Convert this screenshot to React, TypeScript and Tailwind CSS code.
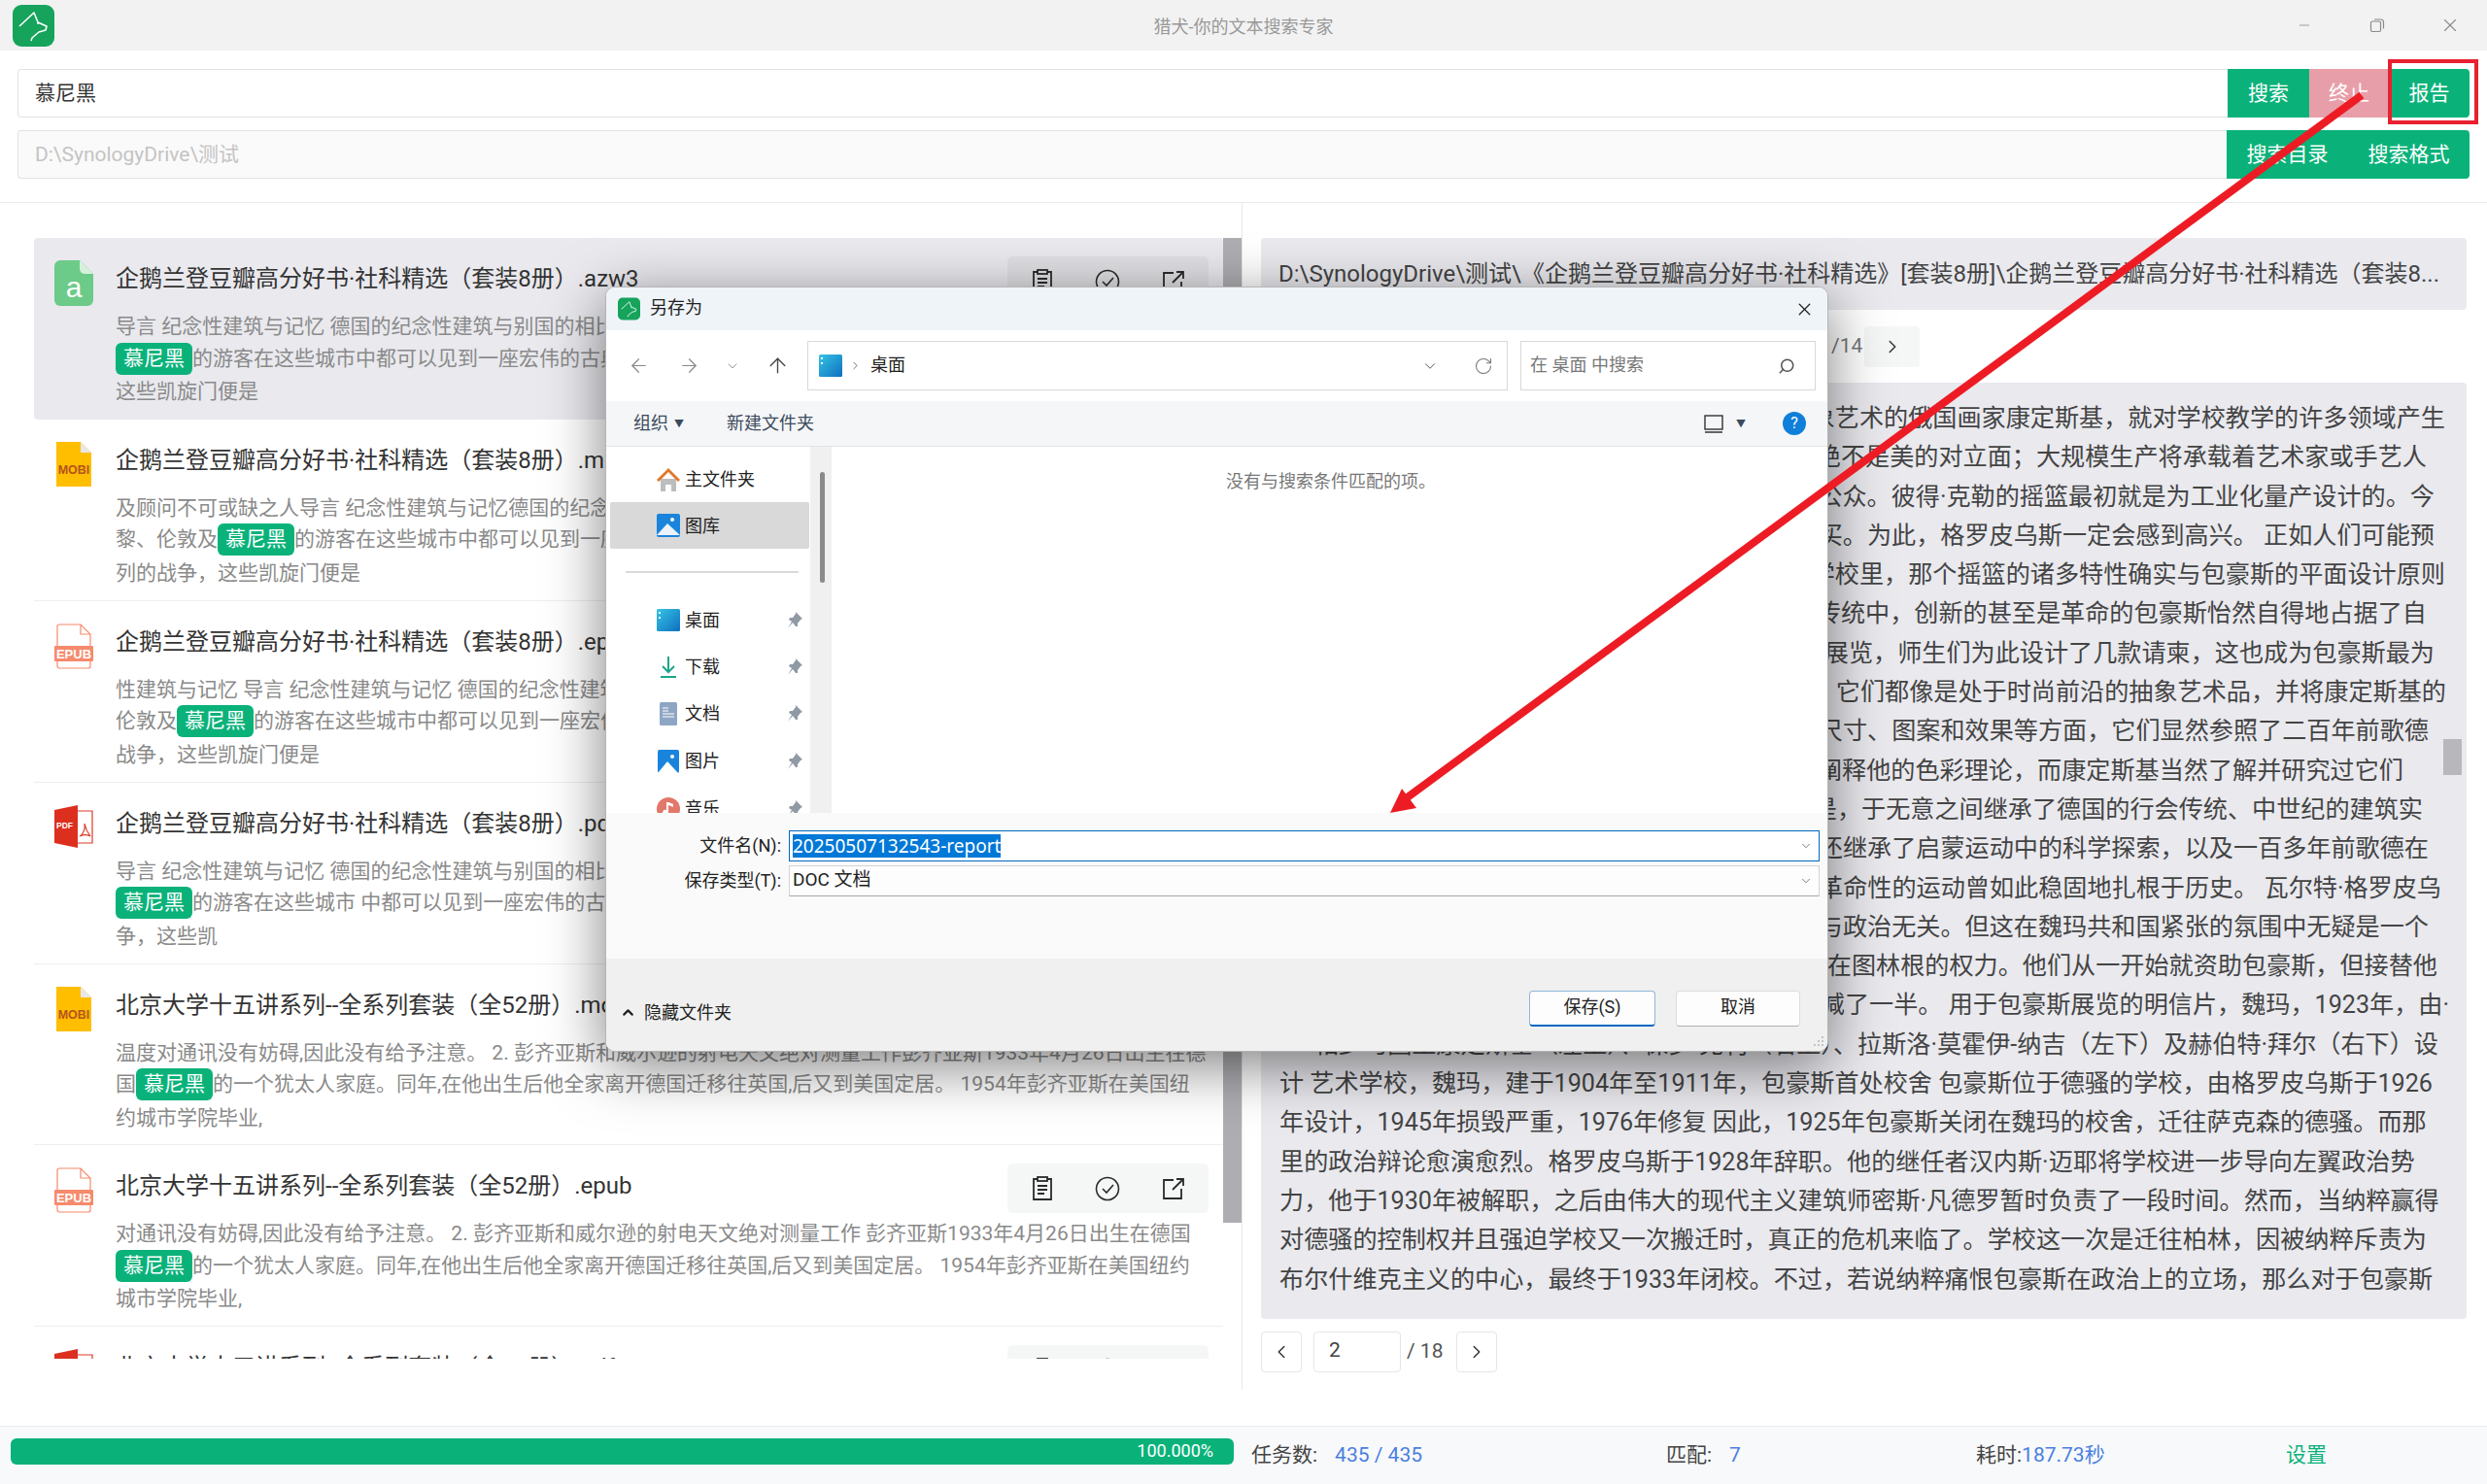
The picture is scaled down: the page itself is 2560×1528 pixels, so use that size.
import React from 'react';
import { ArrowLeft, ArrowRight, ArrowUp, ChevronDown, ChevronLeft, ChevronRight, ChevronUp, Minus, RotateCw, Search, X } from 'lucide-react';

const Logo = ({ className }: { className: string }) => (
  <svg className={className} viewBox="0 0 43 43">
    <rect width="43" height="43" rx="9" fill="#16a35c" />
    <path d="M7 22L22 8l4 10 9 4-1 4-7 2-7 6-1 3" fill="none" stroke="#fff" strokeWidth="1.6" strokeLinejoin="round" />
    <circle cx="26" cy="19" r="1" fill="#fff" />
  </svg>
);

const FileIcon = ({ type }: { type: string }) => {
  if (type === 'azw3') {
    return (
      <svg className="w-[40px] h-[47px]" viewBox="0 0 40 47">
        <path d="M6 0h20l14 14v27a6 6 0 0 1-6 6H6a6 6 0 0 1-6-6V6a6 6 0 0 1 6-6z" fill="#6ccb88" />
        <path d="M26 0v9a5 5 0 0 0 5 5h9z" fill="#d6f0dd" />
        <text x="20" y="38" textAnchor="middle" fontSize="30" fill="#fff" fontFamily="Liberation Sans">a</text>
      </svg>
    );
  }
  if (type === 'mobi') {
    return (
      <svg className="w-[40px] h-[47px]" viewBox="0 0 40 47">
        <path d="M2 0h25l11 11v35H2z" fill="#ffbe00" />
        <path d="M27 0l11 11H27z" fill="#e8e8e8" />
        <text x="20" y="33" textAnchor="middle" fontSize="12.5" fontWeight="700" fill="#b4541c" fontFamily="Liberation Sans">MOBI</text>
      </svg>
    );
  }
  if (type === 'epub') {
    return (
      <svg className="w-[40px] h-[47px]" viewBox="0 0 40 47">
        <path d="M3 3a2 2 0 0 1 2-2h22l10 10v33a2 2 0 0 1-2 2H5a2 2 0 0 1-2-2z" fill="#fff" stroke="#f68a6c" strokeWidth="1.2" />
        <path d="M27 1v10h10" fill="none" stroke="#f68a6c" strokeWidth="1.2" />
        <rect x="0" y="23" width="40" height="16" rx="1" fill="#f68a6c" />
        <text x="20" y="35.5" textAnchor="middle" fontSize="13" fontWeight="700" fill="#fff" fontFamily="Liberation Sans">EPUB</text>
      </svg>
    );
  }
  return (
    <svg className="w-[40px] h-[47px]" viewBox="0 0 40 47">
      <path d="M22 6h17v33H22" fill="#fff" stroke="#dd3a26" strokeWidth="1.2" />
      <path d="M0 5L24 0v44L0 39z" fill="#dc2f1e" />
      <text x="2" y="24" fontSize="8.5" fontWeight="700" fill="#fff" fontFamily="Liberation Sans">PDF</text>
      <path d="M26 32c4-2 6-8 5-13 1 5 3 9 6 13-4-2-7-2-11 0z" fill="none" stroke="#dd3a26" strokeWidth="1.2" />
    </svg>
  );
};

const Actions = ({ selected }: { selected: boolean }) => (
  <div className={`w-[207px] h-[51px] rounded-md flex items-center justify-around px-[3px] text-[#2b2b2b] ${selected ? 'bg-[#e0e0e4]' : 'bg-[#f5f6f6]'}`}>
    <svg className="w-[24px] h-[26px]" viewBox="0 0 24 26" fill="none" stroke="currentColor" strokeWidth="1.8">
      <path d="M7 3H3v21h18V3h-4" />
      <rect x="7" y="1" width="10" height="4" />
      <path d="M7 10h10M7 14h10M7 18h7" />
    </svg>
    <svg className="w-[26px] h-[26px]" viewBox="0 0 26 26" fill="none" stroke="currentColor" strokeWidth="1.6">
      <circle cx="13" cy="13" r="11.5" />
      <path d="M8 13l4 4 7-8" />
    </svg>
    <svg className="w-[24px] h-[24px]" viewBox="0 0 24 24" fill="none" stroke="currentColor" strokeWidth="1.8">
      <path d="M12 3H2v19h18V12" />
      <path d="M11 13L22 2M15 2h7v7" />
    </svg>
  </div>
);

const Hit = () => <span className="inline-block bg-[#0ab27a] text-white rounded-[6px] px-[8px] h-[33px] leading-[33px] align-top">慕尼黑</span>;

const items = [
  { type: 'azw3', title: '企鹅兰登豆瓣高分好书·社科精选（套装8册）.azw3', a: '导言 纪念性建筑与记忆 德国的纪念性建筑与别国的相比', b: '', c: '的游客在这些城市中都可以见到一座宏伟的古典', d: '这些凯旋门便是' },
  { type: 'mobi', title: '企鹅兰登豆瓣高分好书·社科精选（套装8册）.mobi', a: '及顾问不可或缺之人导言 纪念性建筑与记忆德国的纪念性建筑', b: '黎、伦敦及', c: '的游客在这些城市中都可以见到一座宏伟', d: '列的战争，这些凯旋门便是' },
  { type: 'epub', title: '企鹅兰登豆瓣高分好书·社科精选（套装8册）.epub', a: '性建筑与记忆 导言 纪念性建筑与记忆 德国的纪念性建筑', b: '伦敦及', c: '的游客在这些城市中都可以见到一座宏伟', d: '战争，这些凯旋门便是' },
  { type: 'pdf', title: '企鹅兰登豆瓣高分好书·社科精选（套装8册）.pdf', a: '导言 纪念性建筑与记忆 德国的纪念性建筑与别国的相比', b: '', c: '的游客在这些城市 中都可以见到一座宏伟的古典', d: '争，这些凯' },
  { type: 'mobi', title: '北京大学十五讲系列--全系列套装（全52册）.mobi', a: '温度对通讯没有妨碍,因此没有给予注意。 2. 彭齐亚斯和威尔逊的射电天文绝对测量工作彭齐亚斯1933年4月26日出生在德', b: '国', c: '的一个犹太人家庭。同年,在他出生后他全家离开德国迁移往英国,后又到美国定居。 1954年彭齐亚斯在美国纽', d: '约城市学院毕业,' },
  { type: 'epub', title: '北京大学十五讲系列--全系列套装（全52册）.epub', a: '对通讯没有妨碍,因此没有给予注意。 2. 彭齐亚斯和威尔逊的射电天文绝对测量工作 彭齐亚斯1933年4月26日出生在德国', b: '', c: '的一个犹太人家庭。同年,在他出生后他全家离开德国迁移往英国,后又到美国定居。 1954年彭齐亚斯在美国纽约', d: '城市学院毕业,' },
  { type: 'pdf', title: '北京大学十五讲系列--全系列套装（全52册）.pdf', a: '', b: '', c: '', d: '' },
];

// end = x where the line stops in the screenshot, the starts are behind the dialog
const lines = [
  { end: 2517, t: '象艺术的俄国画家康定斯基，就对学校教学的许多领域产生' },
  { end: 2498, t: '绝不是美的对立面；大规模生产将承载着艺术家或手艺人' },
  { end: 2506, t: '公众。彼得·克勒的摇篮最初就是为工业化量产设计的。今' },
  { end: 2506, t: '买。为此，格罗皮乌斯一定会感到高兴。 正如人们可能预' },
  { end: 2517, t: '学校里，那个摇篮的诸多特性确实与包豪斯的平面设计原则' },
  { end: 2498, t: '传统中，创新的甚至是革命的包豪斯怡然自得地占据了自' },
  { end: 2506, t: '展览，师生们为此设计了几款请柬，这也成为包豪斯最为' },
  { end: 2518, t: '它们都像是处于时尚前沿的抽象艺术品，并将康定斯基的' },
  { end: 2500, t: '尺寸、图案和效果等方面，它们显然参照了二百年前歌德' },
  { end: 2474, t: '阐释他的色彩理论，而康定斯基当然了解并研究过它们' },
  { end: 2494, t: '是，于无意之间继承了德国的行会传统、中世纪的建筑实' },
  { end: 2500, t: '还继承了启蒙运动中的科学探索，以及一百多年前歌德在' },
  { end: 2513, t: '革命性的运动曾如此稳固地扎根于历史。 瓦尔特·格罗皮乌' },
  { end: 2500, t: '与政治无关。但这在魏玛共和国紧张的氛围中无疑是一个' },
  { end: 2509, t: '在图林根的权力。他们从一开始就资助包豪斯，但接替他' },
  { end: 2521, t: '减了一半。 用于包豪斯展览的明信片，魏玛，1923年，由·' },
  { end: 2510, t: '相少马圈王康定斯基（左上）、保罗·克利（右上）、拉斯洛·莫霍伊-纳吉（左下）及赫伯特·拜尔（右下）设' },
];

const fullLines = [
  '计 艺术学校，魏玛，建于1904年至1911年，包豪斯首处校舍 包豪斯位于德骚的学校，由格罗皮乌斯于1926',
  '年设计，1945年损毁严重，1976年修复 因此，1925年包豪斯关闭在魏玛的校舍，迁往萨克森的德骚。而那',
  '里的政治辩论愈演愈烈。格罗皮乌斯于1928年辞职。他的继任者汉内斯·迈耶将学校进一步导向左翼政治势',
  '力，他于1930年被解职，之后由伟大的现代主义建筑师密斯·凡德罗暂时负责了一段时间。然而，当纳粹赢得',
  '对德骚的控制权并且强迫学校又一次搬迁时，真正的危机来临了。学校这一次是迁往柏林，因被纳粹斥责为',
  '布尔什维克主义的中心，最终于1933年闭校。不过，若说纳粹痛恨包豪斯在政治上的立场，那么对于包豪斯',
];

const Pin = () => (
  <svg className="w-[16px] h-[18px] ml-auto" viewBox="0 0 16 18" fill="#8f9aa5">
    <path d="M9 0l7 7-2 1-3 4 0 3-2 0-3-4-5 6 4-7-3-2 1-2 3 0 3-4z" />
  </svg>
);

const DesktopIcon = () => (
  <svg className="w-[24px] h-[24px]" viewBox="0 0 24 24">
    <defs>
      <linearGradient id="desk" x1="0" y1="0" x2="1" y2="1">
        <stop offset="0" stopColor="#35c4e4" />
        <stop offset="1" stopColor="#0f6fc0" />
      </linearGradient>
    </defs>
    <rect width="24" height="23" rx="1.5" fill="url(#desk)" />
    <rect x="2" y="3" width="2" height="2" fill="#fff" />
    <rect x="2" y="8" width="2" height="2" fill="#fff" />
  </svg>
);

const navItems = [
  {
    label: '桌面',
    h: 'h-[49px]',
    icon: <DesktopIcon />,
  },
  {
    label: '下载',
    h: 'h-[47px]',
    icon: (
      <svg className="w-[24px] h-[24px]" viewBox="0 0 24 24" fill="none" stroke="#1fa58a" strokeWidth="2">
        <path d="M12 1v16M6 11l6 6 6-6M4 22h16" />
      </svg>
    ),
  },
  {
    label: '文档',
    h: 'h-[49px]',
    icon: (
      <svg className="w-[24px] h-[24px]" viewBox="0 0 24 24">
        <rect x="3" width="18" height="24" rx="1.5" fill="#8ea6c4" />
        <path d="M6 6h6M6 9h6M6 12h12M6 15h12" stroke="#fff" strokeWidth="1.2" />
      </svg>
    ),
  },
  {
    label: '图片',
    h: 'h-[49px]',
    icon: (
      <svg className="w-[24px] h-[24px]" viewBox="0 0 24 24">
        <rect width="22" height="24" x="1" rx="2" fill="#1a84dc" />
        <path d="M1 24l10-12 11 12z" fill="#fff" />
        <circle cx="16" cy="7" r="2" fill="#fff" />
      </svg>
    ),
  },
  {
    label: '音乐',
    h: 'h-[49px]',
    icon: (
      <svg className="w-[24px] h-[24px]" viewBox="0 0 24 24">
        <circle cx="12" cy="12" r="12" fill="#e2776a" />
        <path d="M12 5v11a3 3 0 1 1-2-3V5zM12 5l5 2v3l-5-2z" fill="#fff" />
      </svg>
    ),
  },
];

const SaveDialog = () => (
  <div className="absolute left-[623px] top-[295px] w-[1259px] h-[788px] rounded-[10px] overflow-hidden border border-[#b4b4b4] bg-white flex flex-col shadow-[0_14px_60px_rgba(0,0,0,0.5)]">
    <div className="h-[44px] shrink-0 bg-[#eff4f9] flex items-center pl-[12px] pr-[13px]">
      <Logo className="w-[23px] h-[24px]" />
      <span className="ml-[10px] text-[18px] text-[#222] -mt-[3px]">另存为</span>
      <X className="ml-auto w-[21px] h-[21px] text-[#222]" strokeWidth={1.5} />
    </div>
    <div className="h-[73px] shrink-0 flex items-center pl-[22px] text-[#8a8a8a]">
      <ArrowLeft className="w-[23px] h-[23px]" strokeWidth={1.3} />
      <ArrowRight className="w-[23px] h-[23px] ml-[29px]" strokeWidth={1.3} />
      <ChevronDown className="w-[16px] h-[16px] ml-[25px]" strokeWidth={1.3} />
      <ArrowUp className="w-[25px] h-[25px] ml-[26px] text-[#444]" strokeWidth={1.3} />
      <div className="ml-[18px] w-[721px] h-[51px] border border-[#d9d9d9] flex items-center pl-[11px] pr-[14px]">
        <DesktopIcon />
        <ChevronRight className="w-[13px] h-[13px] ml-[7px] text-[#555]" strokeWidth={1.5} />
        <span className="ml-[9px] text-[18px] text-[#222] -mt-[2px]">桌面</span>
        <ChevronDown className="w-[18px] h-[18px] ml-auto text-[#555]" strokeWidth={1.3} />
        <RotateCw className="w-[20px] h-[20px] ml-[36px] text-[#777]" strokeWidth={1.3} />
      </div>
      <div className="ml-[13px] w-[304px] h-[51px] border border-[#d9d9d9] flex items-center pl-[9px] pr-[20px] text-[18px] text-[#777]">
        <span className="-mt-[2px]">在 桌面 中搜索</span>
        <Search className="w-[18px] h-[18px] ml-auto text-[#555] -scale-x-100" strokeWidth={2} />
      </div>
    </div>
    <div className="h-[47px] shrink-0 bg-[#f5f6f8] border-b border-[#e4e4e4] flex items-center pl-[28px] pr-[22px] text-[18px] text-[#3b4a5c]">
      <span className="-mt-[2px]">组织</span>
      <span className="ml-[6px] text-[10px]">▼</span>
      <span className="ml-[44px] -mt-[2px]">新建文件夹</span>
      <svg className="ml-auto w-[22px] h-[22px]" viewBox="0 0 22 22" fill="none" stroke="#333" strokeWidth="1.4">
        <rect x="2" y="3" width="18" height="14" />
        <path d="M2 20h18" />
      </svg>
      <span className="ml-[12px] text-[10px]">▼</span>
      <div className="ml-[38px] w-[24px] h-[24px] rounded-full bg-[#0f7fd9] text-white text-[16px] leading-[24px] text-center">?</div>
    </div>
    <div className="h-[377px] shrink-0 flex">
      <div className="w-[210px] shrink-0 overflow-hidden pt-[10px] pl-[4px]">
        <div className="h-[47px] flex items-center pl-[48px] text-[18px] text-[#222]">
          <svg className="w-[24px] h-[24px]" viewBox="0 0 24 24">
            <path d="M4 11h16v13h-5v-7H9v7H4z" fill="#bdbdbd" />
            <path d="M0 12L12 0l12 12-2 2L12 4 2 14z" fill="#e0762a" />
          </svg>
          <span className="ml-[5px]">主文件夹</span>
        </div>
        <div className="h-[48px] flex items-center pl-[48px] w-[205px] bg-[#d9d9d9] rounded-[2px] text-[18px] text-[#222]">
          <svg className="w-[24px] h-[24px]" viewBox="0 0 24 24">
            <rect width="24" height="24" rx="2" fill="#1a84dc" />
            <path d="M0 22l11-12 13 12z" fill="#eaf2fb" />
            <circle cx="16" cy="6" r="2" fill="#fff" />
          </svg>
          <span className="ml-[5px]">图库</span>
        </div>
        <div className="ml-[16px] mr-[12px] mt-[23px] mb-[24px] h-[2px] bg-[#d9d9d9]" />
        {navItems.map((n) => (
          <div key={n.label} className={`${n.h} flex items-center pl-[48px] pr-[8px] text-[18px] text-[#222]`}>
            {n.icon}
            <span className="ml-[5px] -mt-[1px]">{n.label}</span>
            <Pin />
          </div>
        ))}
      </div>
      <div className="w-[25px] shrink-0 bg-[#f0f0f0] pt-[26px] border-r-[3px] border-white">
        <div className="ml-[10px] w-[5px] h-[114px] rounded bg-[#8a8a8a]" />
      </div>
      <div className="flex-1 flex justify-center pt-[24px]">
        <span className="text-[18px] leading-[24px] text-[#777]">没有与搜索条件匹配的项。</span>
      </div>
    </div>
    <div className="h-[150px] shrink-0 bg-[#fafafa] pt-[18px]">
      <div className="flex items-center h-[32px]">
        <span className="w-[180px] text-right text-[18px] text-[#222] -mt-[2px]">文件名(N):</span>
        <div className="ml-[8px] w-[1061px] h-[32px] bg-white border border-[#0067c0] flex items-center pl-[3px] pr-[6px]">
          <span className="bg-[#0078d7] text-white text-[19px] leading-[24px] font-['Noto_Sans',sans-serif]">20250507132543-report</span>
          <ChevronDown className="ml-auto w-[14px] h-[14px] text-[#555]" strokeWidth={1.3} />
        </div>
      </div>
      <div className="flex items-center h-[32px] mt-[4px]">
        <span className="w-[180px] text-right text-[18px] text-[#222] -mt-[2px]">保存类型(T):</span>
        <div className="ml-[8px] w-[1061px] h-[32px] bg-[#fdfdfd] border border-[#d4d4d4] border-b-[#a8a8a8] flex items-center pl-[3px] pr-[6px] text-[19px] text-[#222]">
          <span className="-mt-[2px]">DOC 文档</span>
          <ChevronDown className="ml-auto w-[14px] h-[14px] text-[#555]" strokeWidth={1.3} />
        </div>
      </div>
    </div>
    <div className="flex-1 bg-[#f0f0f0] flex items-start pl-[14px] pr-[28px] pt-[33px] relative">
      <div className="flex items-center h-[37px] mt-[4px] text-[18px] text-[#222]">
        <ChevronUp className="w-[17px] h-[17px]" strokeWidth={3} />
        <span className="ml-[8px]">隐藏文件夹</span>
      </div>
      <div className="ml-auto w-[130px] h-[37px] bg-[#fdfdfd] rounded-[4px] border border-[#0067c0] border-t-[#8fb8dc] border-x-[#8fb8dc] border-b-2 text-[18px] text-[#222] text-center leading-[32px]">保存(S)</div>
      <div className="ml-[21px] w-[128px] h-[37px] bg-[#fdfdfd] rounded-[4px] border border-[#dcdcdc] border-b-[#b0b0b0] text-[18px] text-[#222] text-center leading-[32px]">取消</div>
      {/* resize grip */}
      <svg className="absolute right-[3px] bottom-[3px] w-[12px] h-[12px]" viewBox="0 0 12 12" fill="#c4c4c4">
        <rect x="9" y="0" width="2" height="2" />
        <rect x="5" y="4" width="2" height="2" />
        <rect x="9" y="4" width="2" height="2" />
        <rect x="1" y="8" width="2" height="2" />
        <rect x="5" y="8" width="2" height="2" />
        <rect x="9" y="8" width="2" height="2" />
      </svg>
    </div>
  </div>
);

export default function App() {
  return (
    <div className="relative w-[2560px] h-[1528px] overflow-hidden bg-white flex flex-col font-['Roboto','Noto_Sans_CJK_SC',sans-serif]">
      {/* title bar */}
      <div className="h-[52px] shrink-0 bg-[#f2f2f2] relative flex items-center justify-center">
        <Logo className="absolute left-[13px] top-[5px] w-[43px] h-[43px]" />
        <span className="text-[18px] text-[#999] pt-[2px]">猎犬-你的文本搜索专家</span>
        <div className="absolute right-[27px] top-0 h-[52px] flex items-center text-[#8a8a8a]">
          <Minus className="w-[16px] h-[16px]" strokeWidth={1.2} />
          <svg className="ml-[59px] w-[16px] h-[16px]" viewBox="0 0 16 16" fill="none" stroke="currentColor" strokeWidth="1.2">
            <rect x="1.5" y="4" width="10" height="10.5" rx="1.5" />
            <path d="M5 2h6.5a3 3 0 0 1 3 3v6.5" />
          </svg>
          <X className="ml-[56px] w-[22px] h-[22px]" strokeWidth={1.2} />
        </div>
      </div>

      {/* search inputs */}
      <div className="h-[157px] shrink-0 border-b border-[#eaeaea] px-[18px] pt-[19px] flex flex-col gap-[13px]">
        <div className="flex h-[50px]">
          <div className="flex-1 border border-r-0 border-[#e2e2e2] rounded-l-[4px] flex items-center pl-[17px] pt-[2px] text-[21px] text-[#333]">慕尼黑</div>
          <div className="w-[84px] bg-[#0ab27a] text-white text-[21px] pt-[2px] flex items-center justify-center">搜索</div>
          <div className="w-[82px] bg-[#e89ea9] text-white text-[21px] pt-[2px] flex items-center justify-center">终止</div>
          <div className="w-[83px] bg-[#0ab27a] text-white text-[21px] pt-[2px] flex items-center justify-center rounded-r-[4px]">报告</div>
        </div>
        <div className="flex h-[50px]">
          <div className="flex-1 border border-r-0 border-[#e2e2e2] bg-[#fafafa] rounded-l-[4px] flex items-center pl-[17px] pt-[2px] text-[21px] text-[#c4c4c4]">D:\SynologyDrive\测试</div>
          <div className="w-[125px] bg-[#0ab27a] text-white text-[21px] pt-[2px] flex items-center justify-center">搜索目录</div>
          <div className="w-[125px] bg-[#0ab27a] text-white text-[21px] pt-[2px] flex items-center justify-center rounded-r-[4px]">搜索格式</div>
        </div>
      </div>

      {/* main */}
      <div className="flex-1 min-h-0 flex">
        <div className="w-[1279px] shrink-0 h-[1222px] border-r border-[#e8e8e8] pl-[35px] pt-[36px] flex">
          <div className="w-[1224px] h-[1154px] overflow-hidden">
            {items.map((it, i) => (
              <div key={i} className={`h-[186.9px] flex overflow-hidden ${i === 0 ? 'bg-[#e9e9ee] rounded-[4px]' : 'border-b border-[#eeeeee]'}`}>
                <div className="w-[84px] shrink-0 pl-[21px] pt-[23px]">
                  <FileIcon type={it.type} />
                </div>
                <div className="flex-1 min-w-0 pr-[15px] pt-[19px]">
                  <div className="h-[51px] pb-[5px] flex items-center justify-between">
                    <span className="text-[24px] text-[#333] whitespace-nowrap">{it.title}</span>
                    <div className="-mb-[5px]">
                      <Actions selected={i === 0} />
                    </div>
                  </div>
                  <div className="mt-[5px] text-[21px] leading-[33.5px] text-[#8a8a8a] whitespace-nowrap">
                    <div>{it.a}</div>
                    <div className="-mt-[1px]">{it.b}<Hit />{it.c}</div>
                    <div className="mt-[1px]">{it.d}</div>
                  </div>
                </div>
              </div>
            ))}
          </div>
          <div className="w-[19px] shrink-0">
            <div className="h-[1014px] bg-[#aeaeb2]" />
          </div>
        </div>

        <div className="flex-1 min-w-0 pl-[19px] pr-[21px] pt-[36px]">
          <div className="h-[74px] bg-[#e9e9ee] rounded-[4px] pl-[18px] pr-[18px] pb-[1px] flex items-center text-[24px] text-[#444]">
            <span className="whitespace-nowrap overflow-hidden text-ellipsis">D:\SynologyDrive\测试\《企鹅兰登豆瓣高分好书·社科精选》[套装8册]\企鹅兰登豆瓣高分好书·社科精选（套装8...</span>
          </div>
          <div className="h-[42px] mt-[17px] flex items-center">
            <div className="w-[57px] h-[42px]" />
            <div className="w-[530px] h-[42px]" />
            <span className="w-[34px] text-[21px] text-[#777]">/14</span>
            <div className="w-[57px] h-[42px] bg-[#f5f6f6] rounded flex items-center justify-center text-[#333]">
              <ChevronRight className="w-[22px] h-[22px]" strokeWidth={1.6} />
            </div>
          </div>
          <div className="h-[964px] mt-[16px] bg-[#e9e9ee] rounded-[4px] pt-[17px] relative overflow-hidden">
            {lines.map((l) => (
              <div key={l.t} className="h-[40.3px] leading-[40.3px] text-[25.14px] text-[#444] whitespace-nowrap flex justify-end" style={{ paddingRight: 2539 - l.end }}>
                {l.t}
              </div>
            ))}
            {fullLines.map((t) => (
              <div key={t} className="h-[40.3px] leading-[40.3px] text-[25.14px] text-[#444] whitespace-nowrap pl-[19px]">
                {t}
              </div>
            ))}
            {/* preview scroll thumb */}
            <div className="absolute right-[5px] top-[367px] w-[19px] h-[37px] bg-[#b8b8bc]" />
          </div>
          <div className="h-[42px] mt-[13px] flex items-center text-[21px] text-[#555]">
            <div className="w-[42px] h-[42px] border border-[#e6e6e6] rounded flex items-center justify-center text-[#333]">
              <ChevronLeft className="w-[22px] h-[22px]" strokeWidth={1.6} />
            </div>
            <div className="ml-[12px] w-[90px] h-[42px] border border-[#e6e6e6] rounded pl-[15px] leading-[36px] text-[#444]">2</div>
            <span className="ml-[6px] w-[47px]">/ 18</span>
            <div className="ml-[4px] w-[42px] h-[42px] border border-[#e6e6e6] rounded flex items-center justify-center text-[#333]">
              <ChevronRight className="w-[22px] h-[22px]" strokeWidth={1.6} />
            </div>
          </div>
        </div>
      </div>

      {/* status bar */}
      <div className="h-[60px] shrink-0 bg-[#f8f9fb] border-t border-[#ececec] flex items-start pt-[12px] text-[21px]">
        <div className="ml-[11px] w-[1259px] h-[27px] bg-[#0ab27a] rounded-md text-white text-[18px] leading-[25px] text-right pr-[21px]">100.000%</div>
        <div className="ml-[18px] w-[427px] flex text-[#444] pt-[2px]">
          <span>任务数:</span>
          <span className="ml-[18px] text-[#4a80e0]">435 / 435</span>
        </div>
        <div className="w-[319px] flex text-[#444] pt-[2px]">
          <span>匹配:</span>
          <span className="ml-[18px] text-[#4a80e0]">7</span>
        </div>
        <div className="w-[319px] flex text-[#444] pt-[2px]">
          <span>耗时:</span>
          <span className="text-[#4a80e0]">187.73秒</span>
        </div>
        <span className="text-[#0ab27a] pt-[2px]">设置</span>
      </div>

      <SaveDialog />

      {/* hand-drawn annotation on the screenshot */}
      <div className="absolute left-[2458px] top-[61px] w-[93px] h-[67px] border-[4px] border-[#e8202f]" />
      <svg className="absolute inset-0 w-[2560px] h-[1528px] pointer-events-none" viewBox="0 0 2560 1528">
        <path d="M2431 98L1446 823" stroke="#ed1c24" strokeWidth="8" fill="none" />
        <path d="M1431 837L1443 812L1458 832z" fill="#ed1c24" />
      </svg>
    </div>
  );
}
